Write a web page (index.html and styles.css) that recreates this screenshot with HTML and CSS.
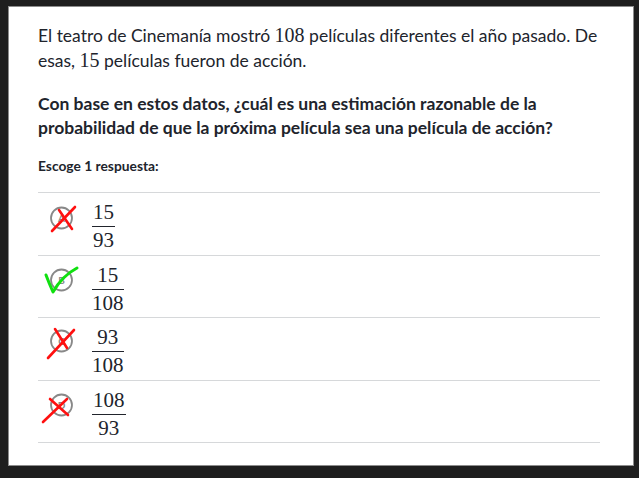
FILE: index.html
```html
<!DOCTYPE html>
<html lang="es">
<head>
<meta charset="utf-8">
<link rel="stylesheet" href="styles.css">
</head>
<body>
<div class="panel">
  <p class="intro">El teatro de Cinemanía mostró <span class="math">108</span> películas diferentes el año pasado. De esas, <span class="math">15</span> películas fueron de acción.</p>
  <p class="question">Con base en estos datos, ¿cuál es una estimación razonable de la probabilidad de que la próxima película sea una película de acción?</p>
  <p class="prompt">Escoge 1 respuesta:</p>
  <ul class="options">
    <li class="option">
      <svg class="mark" width="54" height="50" viewBox="0 0 54 50">
        <circle cx="23.5" cy="25" r="10.5" fill="none" stroke="#888" stroke-width="1.8"/>
        <text x="23.5" y="28.5" text-anchor="middle" class="letter">A</text>
        <path d="M14 38 L37 14" stroke="#ff1010" stroke-width="2.6" stroke-linecap="round" fill="none"/>
        <path d="M21 17 L34 36" stroke="#ff1010" stroke-width="2.6" stroke-linecap="round" fill="none"/>
      </svg>
      <span class="frac"><span class="num">15</span><span class="den">93</span></span>
    </li>
    <li class="option">
      <svg class="mark" width="54" height="50" viewBox="0 0 54 50">
        <circle cx="23.5" cy="24" r="10.5" fill="none" stroke="#888" stroke-width="1.8"/>
        <text x="23.5" y="27.5" text-anchor="middle" class="letter">B</text>
        <path d="M8 19 Q11 27 15 36 Q24 20 39 12" stroke="#10e010" stroke-width="3" stroke-linecap="round" stroke-linejoin="round" fill="none"/>
      </svg>
      <span class="frac"><span class="num">15</span><span class="den">108</span></span>
    </li>
    <li class="option">
      <svg class="mark" width="54" height="50" viewBox="0 0 54 50">
        <circle cx="23.5" cy="23" r="10.5" fill="none" stroke="#888" stroke-width="1.8"/>
        <text x="23.5" y="26.5" text-anchor="middle" class="letter">C</text>
        <path d="M10 40 L36 12" stroke="#ff1010" stroke-width="2.6" stroke-linecap="round" fill="none"/>
        <path d="M17 11 L29 30" stroke="#ff1010" stroke-width="2.6" stroke-linecap="round" fill="none"/>
      </svg>
      <span class="frac"><span class="num">93</span><span class="den">108</span></span>
    </li>
    <li class="option">
      <svg class="mark" width="54" height="50" viewBox="0 0 54 50">
        <circle cx="23.5" cy="24" r="10.5" fill="none" stroke="#888" stroke-width="1.8"/>
        <text x="23.5" y="27.5" text-anchor="middle" class="letter">D</text>
        <path d="M5 41 L29 18" stroke="#ff1010" stroke-width="2.6" stroke-linecap="round" fill="none"/>
        <path d="M12 18 L30 34" stroke="#ff1010" stroke-width="2.6" stroke-linecap="round" fill="none"/>
      </svg>
      <span class="frac"><span class="num">108</span><span class="den">93</span></span>
    </li>
  </ul>
</div>
</body>
</html>
```
FILE: styles.css
```css
html, body {
  margin: 0;
  padding: 0;
  background: #1e1e1e;
}
body {
  padding: 6px 0 0 8px;
  font-family: Lato, "Open Sans", sans-serif;
  color: #21242c;
}
.panel {
  box-sizing: border-box;
  width: 626px;
  height: 460px;
  background: #fff;
  border: 1px solid #8c8c8c;
  padding: 16px 22px 0 29px;
}
p {
  margin: 0;
}
.intro {
  font-size: 17.5px;
  line-height: 25px;
}
.math {
  font-family: "Liberation Serif", serif;
  font-size: 20px;
  line-height: 1;
}
.question {
  margin-top: 19px;
  font-size: 17.5px;
  font-weight: bold;
  line-height: 24px;
}
.prompt {
  margin-top: 16px;
  font-size: 13.8px;
  font-weight: bold;
  line-height: 20px;
}
.options {
  list-style: none;
  margin: 16px 11px 0 0;
  padding: 0;
  border-bottom: 1px solid #d6d8da;
}
.option {
  box-sizing: border-box;
  height: 62.5px;
  border-top: 1px solid #d6d8da;
  display: flex;
  align-items: flex-start;
}
.mark {
  display: block;
  flex: none;
}
.letter {
  font-family: Lato, sans-serif;
  font-size: 10px;
  font-weight: bold;
  fill: #888;
}
.frac {
  display: inline-flex;
  flex-direction: column;
  align-items: center;
  font-family: "Liberation Serif", serif;
  font-size: 21px;
  line-height: 22px;
  padding-top: 8px;
}
.num {
  padding: 0 1px 3px;
  border-bottom: 1px solid #21242c;
  align-self: stretch;
  text-align: center;
}
.den {
  padding-top: 2px;
}
```
